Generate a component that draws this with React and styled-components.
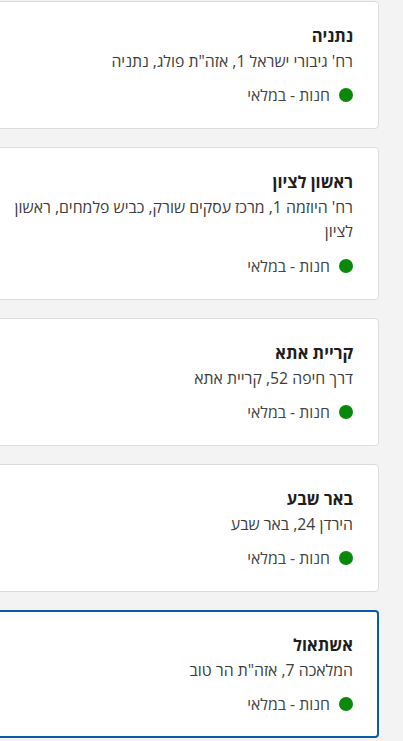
import styled, { createGlobalStyle } from "styled-components";

const GlobalStyle = createGlobalStyle`
  html, body {
    margin: 0;
    padding: 0;
    background: #f3f3f3;
    overflow: hidden;
  }
  body {
    font-family: "Open Sans", "Noto Sans", "DejaVu Sans", sans-serif;
  }
`;

const branches = [
  { name: "נתניה", address: "רח' גיבורי ישראל 1, אזה\"ת פולג, נתניה" },
  {
    name: "ראשון לציון",
    address: "רח' היוזמה 1, מרכז עסקים שורק, כביש פלמחים, ראשון לציון",
  },
  { name: "קריית אתא", address: "דרך חיפה 52, קריית אתא" },
  { name: "באר שבע", address: "הירדן 24, באר שבע" },
  { name: "אשתאול", address: "המלאכה 7, אזה\"ת הר טוב", selected: true },
];

const Page = styled.div`
  direction: rtl;
  padding: 1px 24px 0 0;
  display: flex;
  flex-direction: column;
  align-items: flex-start;
  gap: 18px;
`;

const Card = styled.div`
  box-sizing: border-box;
  width: 420px;
  flex-shrink: 0;
  background: #fff;
  border: ${(p) => (p.$selected ? "2px solid #0b5aa8" : "1px solid #dcdcdc")};
  border-radius: 4px;
  padding: ${(p) => (p.$selected ? "22px 24px" : "23px 25px")};
`;

const Title = styled.div`
  font-size: 16.5px;
  font-weight: 700;
  line-height: 22px;
  color: #1e1e1e;
`;

const Address = styled.div`
  margin-top: 2px;
  font-size: 15.8px;
  line-height: 24px;
  color: #3d3d3d;

  & + div {
    margin-top: ${(p) => (p.$lines > 1 ? "13px" : "12px")};
  }
`;

const Status = styled.div`
  margin-top: 12px;
  height: 20px;
  display: flex;
  align-items: center;
  gap: 9px;
  font-size: 15.8px;
  color: #444;
`;

const Dot = styled.span`
  width: 14px;
  height: 14px;
  border-radius: 50%;
  background: #0a880a;
  flex-shrink: 0;
`;

export default function App() {
  return (
    <>
      <GlobalStyle />
      <Page>
        {branches.map((b) => (
          <Card key={b.name} $selected={b.selected}>
            <Title>{b.name}</Title>
            <Address $lines={b.address.length > 45 ? 2 : 1}>{b.address}</Address>
            <Status>
              <Dot />
              <span>חנות - במלאי</span>
            </Status>
          </Card>
        ))}
      </Page>
    </>
  );
}
